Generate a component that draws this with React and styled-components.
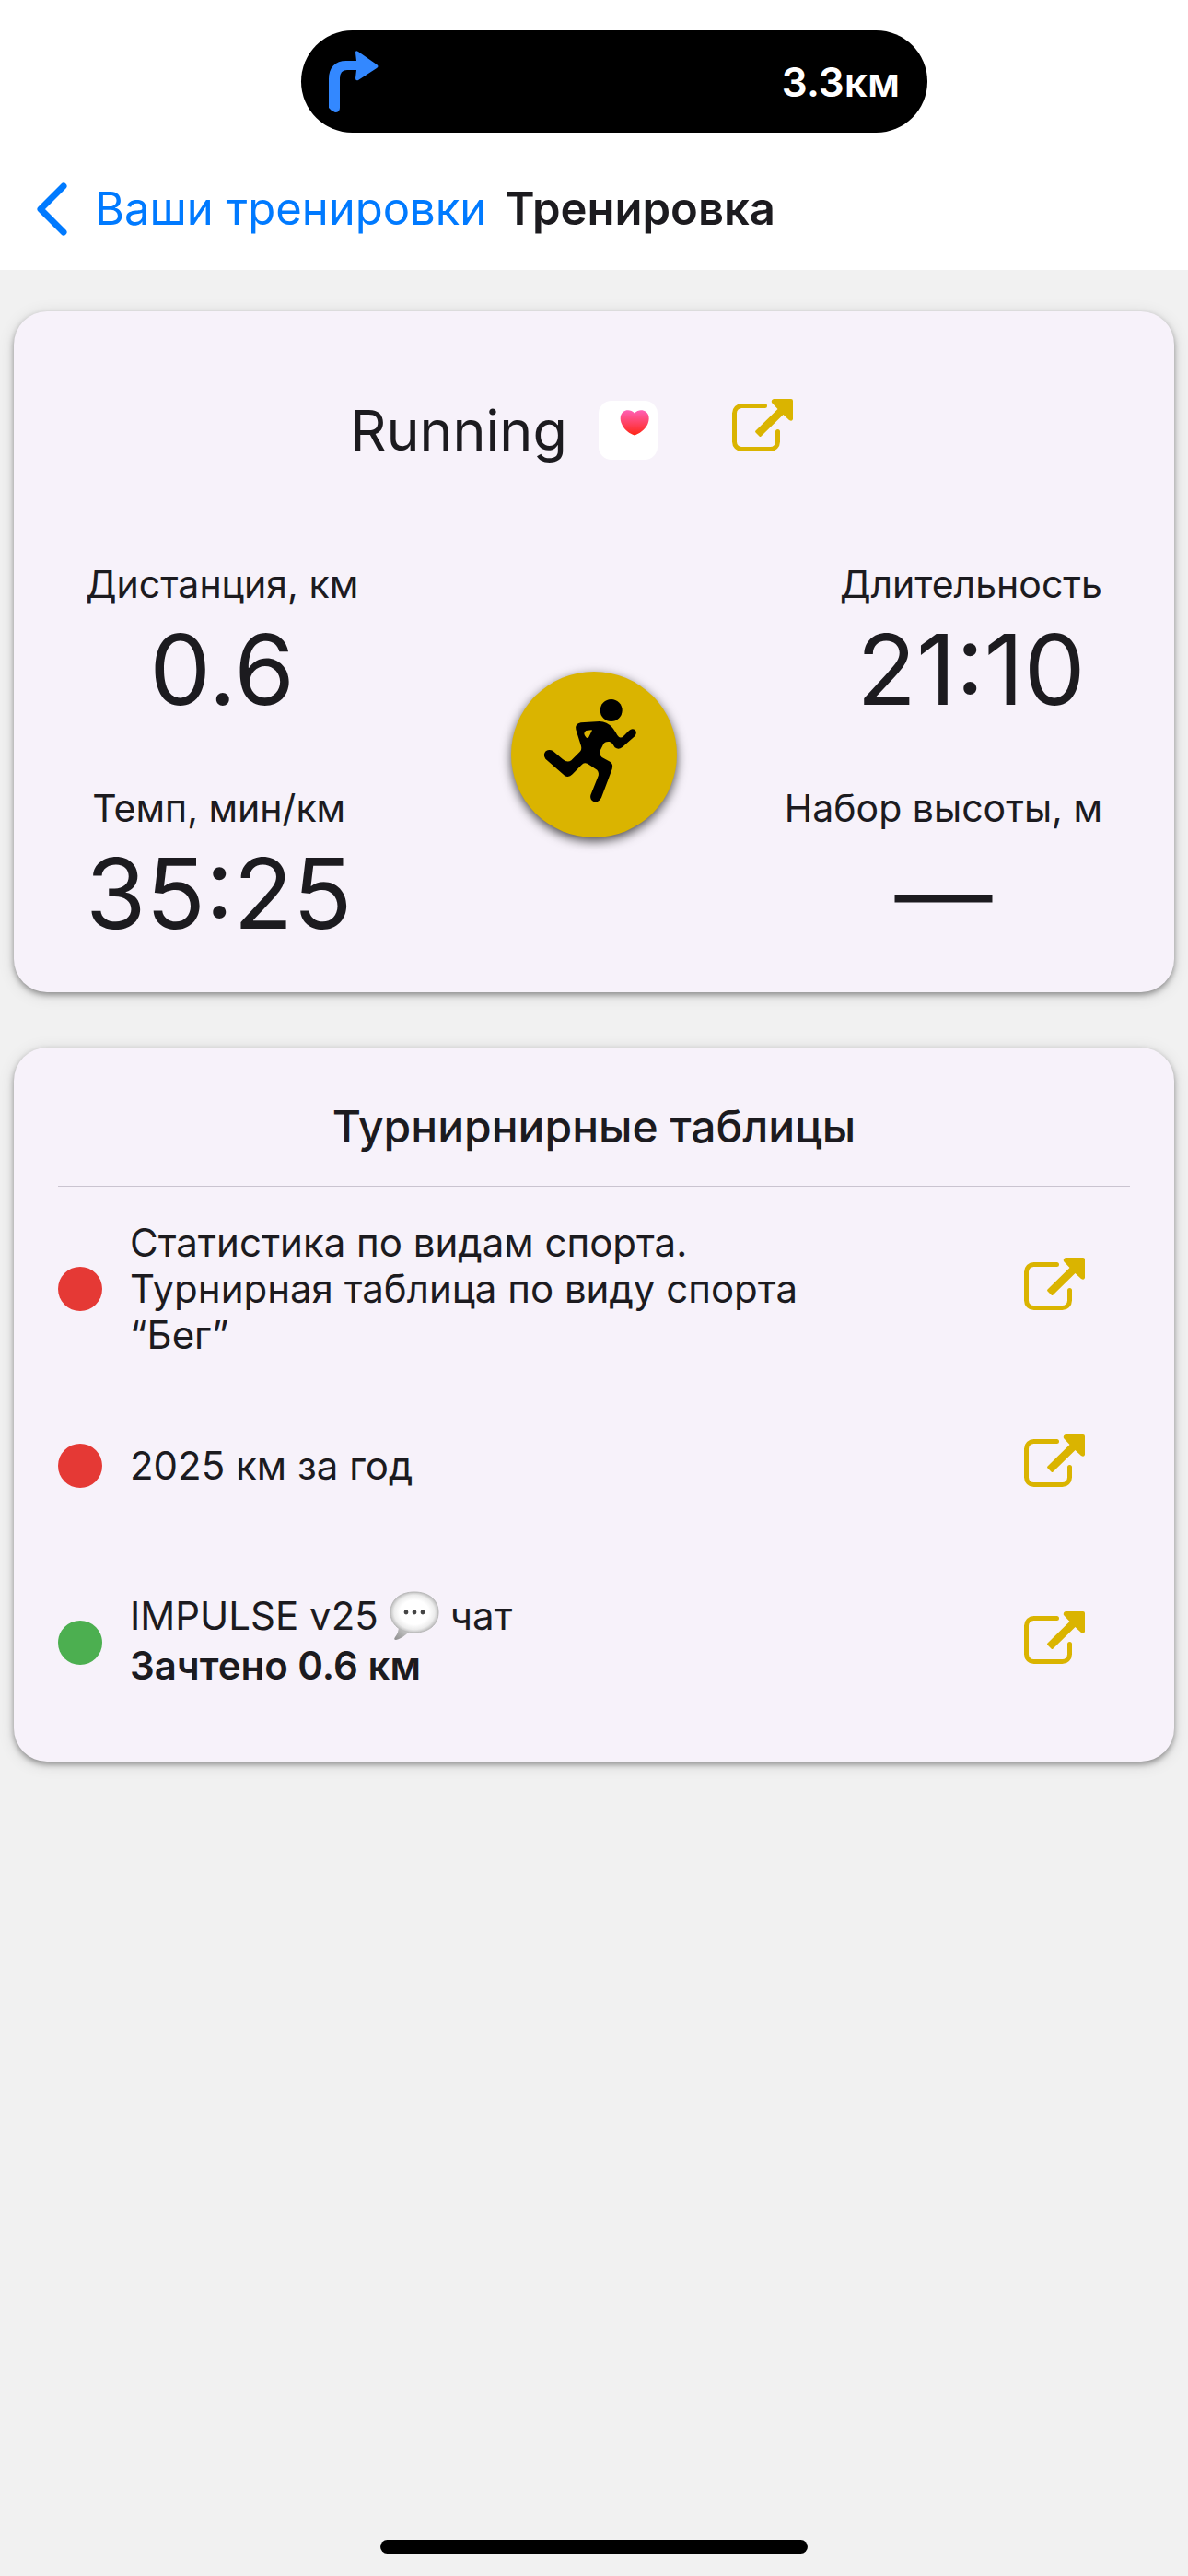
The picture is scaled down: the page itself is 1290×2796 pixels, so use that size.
import styled, { createGlobalStyle } from "styled-components";

const GlobalStyle = createGlobalStyle`
  * {
    box-sizing: border-box;
  }
  body {
    margin: 0;
    background: #f1f1f1;
    font-family: Inter, "Liberation Sans", sans-serif;
    color: #1c1b1f;
  }
`;

const Page = styled.div`
  display: flex;
  flex-direction: column;
  min-height: 100vh;
`;

const TopArea = styled.header`
  padding-top: 33px;
  background: #fff;
`;

const StatusBar = styled.div`
  display: flex;
  justify-content: center;
  padding-left: 44px;
`;

const Island = styled.div`
  display: flex;
  align-items: center;
  justify-content: space-between;
  width: 680px;
  height: 111px;
  padding: 0 30px;
  border-radius: 56px;
  background: #000;
`;

const IslandText = styled.span`
  color: #fff;
  font-size: 44px;
  font-weight: 600;
`;

const NavBar = styled.nav`
  display: flex;
  align-items: center;
  gap: 20px;
  height: 149px;
  padding: 16px 37px 0;
`;

const BackLink = styled.a`
  display: flex;
  align-items: center;
  gap: 30px;
  color: #007aff;
  font-size: 49px;
  text-decoration: none;
`;

const PageTitle = styled.h1`
  margin: 0;
  font-size: 49px;
  font-weight: 600;
`;

const Content = styled.main`
  display: flex;
  flex-direction: column;
  gap: 60px;
  padding: 45px 15px;
`;

const Card = styled.section`
  padding: 0 48px;
  border-radius: 36px;
  background: #f7f2fa;
  box-shadow: 0 3px 6px rgba(0, 0, 0, 0.36), 0 3px 18px rgba(0, 0, 0, 0.12);
`;

const WorkoutHead = styled.div`
  display: flex;
  align-items: center;
  justify-content: center;
  gap: 34px;
  height: 241px;
  padding-top: 18px;
  border-bottom: 1px solid #cac4d0;
`;

const WorkoutName = styled.h2`
  margin: 0;
  font-size: 61px;
  font-weight: 400;
`;

const HealthBadge = styled.div`
  width: 64px;
  height: 64px;
  border-radius: 14px;
  background: #fff;
`;

const IconButton = styled.button`
  display: flex;
  flex-shrink: 0;
  padding: 0 49px 0 47px;
  border: 0;
  background: none;
  cursor: pointer;
`;

const StatsGrid = styled.div`
  display: grid;
  grid-template-columns: 1fr auto 1fr;
  align-items: center;
  padding: 25px 30px 44px;
`;

const StatsColumn = styled.dl`
  display: flex;
  flex-direction: column;
  align-items: ${({ $end }) => ($end ? "flex-end" : "flex-start")};
  gap: 57px;
  margin: 0;
`;

const StatItem = styled.div`
  display: flex;
  flex-direction: column;
  align-items: center;
`;

const StatLabel = styled.dt`
  font-size: 41px;
  line-height: 60px;
`;

const StatValue = styled.dd`
  margin: 0;
  font-size: 106px;
  line-height: 126px;
`;

const SportBadge = styled.div`
  width: 180px;
  height: 180px;
  border-radius: 50%;
  background: #dab400;
  box-shadow: 0 4px 12px rgba(0, 0, 0, 0.7);
`;

const TablesTitle = styled.h2`
  margin: 0;
  padding: 56px 0 34px;
  border-bottom: 1px solid #cac4d0;
  font-size: 48px;
  font-weight: 500;
  line-height: 60px;
  text-align: center;
`;

const TableList = styled.ul`
  margin: 0;
  padding: 15px 0 33px;
  list-style: none;
`;

const TableRow = styled.li`
  display: flex;
  align-items: center;
  min-height: 192px;
`;

const StatusDot = styled.span`
  flex-shrink: 0;
  width: 48px;
  height: 48px;
  border-radius: 50%;
  background: ${({ $done }) => ($done ? "#4caf50" : "#e53935")};
`;

const RowText = styled.div`
  flex: 1;
  margin: 0 160px 0 30px;
  font-size: 42px;
  line-height: 50px;
`;

const RowName = styled.div`
  display: flex;
  align-items: center;
  gap: 12px;
  height: 50px;
`;

const RowResult = styled.div`
  padding: 4px 0;
  font-weight: 600;
`;

const HomeIndicator = styled.div`
  width: 36%;
  height: 15px;
  margin: auto auto 24px;
  border-radius: 8px;
  background: #000;
`;

function TurnIcon() {
  return (
    <svg width="54" height="68" viewBox="0 0 54 68" aria-hidden="true">
      <path
        d="M0 62V31C0 18 7 11 19 11h11L29 2q0-3 3-1L52 15q3 2 0 4L32 32q-3 1-3-2l1-9H20q-8 0-8 9v32q0 5-5 5Q3 66 0 62z"
        fill="#3388ff"
      />
    </svg>
  );
}

function ChevronIcon() {
  return (
    <svg width="36" height="58" viewBox="0 0 36 58" aria-hidden="true">
      <path
        d="M32 4 7 29l25 25"
        fill="none"
        stroke="currentColor"
        strokeWidth="7"
        strokeLinecap="round"
        strokeLinejoin="round"
      />
    </svg>
  );
}

function HeartIcon() {
  return (
    <svg width="64" height="64" viewBox="0 0 64 64" aria-hidden="true">
      <defs>
        <linearGradient id="heart" x1="0" y1="0" x2="0" y2="1">
          <stop offset="0" stopColor="#ff5fb4" />
          <stop offset="1" stopColor="#ff2616" />
        </linearGradient>
      </defs>
      <path
        d="M39 13.500C42 10 46 10 49 10.700C56 13 55.500 21 53 26C50 31.500 44 36 39 37.500C34 36 28 31.500 25.500 26C22.500 20 23 13 29 10.700C32 10 36 10 39 13.500z"
        fill="url(#heart)"
      />
    </svg>
  );
}

// The empty strip under the drawing keeps the arrow optically centred.
function OpenIcon() {
  return (
    <svg width="66" height="68" viewBox="0 0 66 68" aria-hidden="true">
      <path
        d="M35.500 7.500H10.500a8 8 0 0 0-8 8V46.500a8 8 0 0 0 8 8H41.500a8 8 0 0 0 8-8V35.500"
        fill="none"
        stroke="#dab400"
        strokeWidth="5"
        strokeLinecap="round"
      />
      <path
        d="M45 0H64q2 0 2 2V22q-1 3-4 1L55.500 17 31.500 40.500q-1 1-2 0l-4-4q-1-1 0-2L49.500 11 43 4q-1-3 2-4z"
        fill="#dab400"
      />
    </svg>
  );
}

function RunnerIcon() {
  return (
    <svg width="180" height="180" viewBox="0 0 540 540" aria-hidden="true">
      <circle cx="326" cy="126" r="36" />
      <path
        d="M227 166L288 162Q312 163 330 182C341 195 347 212 354 214Q360 216 366 210L384 192Q394 183 404 190Q411 198 404 209L362 246Q350 256 338 247C331 236 328 228 316 228Q304 228 300 237L291 255Q286 270 296 279L322 293Q334 300 329 317L294 410Q286 426 270 424Q255 417 259 402L283 342Q288 330 280 320L254 303Q242 293 231 302L200 334Q187 347 174 338L112 284Q102 271 113 259Q124 251 136 258L168 285Q183 298 196 289L223 262Q231 254 228 242L211 188Q207 170 227 166z"
      />
      <path
        d="M244 192L262 190Q265 190 263 193L253 213Q249 218 244 214Q232 200 244 192z"
        fill="#dab400"
      />
    </svg>
  );
}

function BubbleIcon() {
  return (
    <svg width="54" height="54" viewBox="0 0 54 54" role="img" aria-label="💬">
      <defs>
        <radialGradient id="bubble" cx="0.5" cy="0.5" r="0.5">
          <stop offset="0.6" stopColor="#fff" />
          <stop offset="0.85" stopColor="#ececec" />
          <stop offset="1" stopColor="#c2c2c2" />
        </radialGradient>
        <linearGradient id="bubbleTail" x1="1" y1="0" x2="0" y2="1">
          <stop offset="0" stopColor="#d8d8d8" />
          <stop offset="1" stopColor="#8e8e8e" />
        </linearGradient>
      </defs>
      <path
        d="M10 38q0 7-4 12-2 3 1 3 8-2 15-10z"
        fill="url(#bubbleTail)"
      />
      <path
        d="M27 1C43 1 53 10 53 23S43 45 27 45 1 36 1 23 11 1 27 1z"
        fill="url(#bubble)"
        stroke="#b9b9b9"
      />
      <circle cx="18" cy="23" r="2.400" fill="#444" />
      <circle cx="27" cy="23" r="2.400" fill="#444" />
      <circle cx="36" cy="23" r="2.400" fill="#444" />
    </svg>
  );
}

function Stat({ label, value }) {
  return (
    <StatItem>
      <StatLabel>{label}</StatLabel>
      <StatValue>{value}</StatValue>
    </StatItem>
  );
}

function TournamentRow({ done, children }) {
  return (
    <TableRow>
      <StatusDot $done={done} />
      <RowText>{children}</RowText>
      <IconButton type="button" aria-label="Открыть">
        <OpenIcon />
      </IconButton>
    </TableRow>
  );
}

function App() {
  return (
    <Page>
      <GlobalStyle />
      <TopArea>
        <StatusBar>
          <Island>
            <TurnIcon />
            <IslandText>3.3км</IslandText>
          </Island>
        </StatusBar>
        <NavBar>
          <BackLink href="#">
            <ChevronIcon />
            Ваши тренировки
          </BackLink>
          <PageTitle>Тренировка</PageTitle>
        </NavBar>
      </TopArea>
      <Content>
        <Card>
          <WorkoutHead>
            <WorkoutName>Running</WorkoutName>
            <HealthBadge>
              <HeartIcon />
            </HealthBadge>
            <IconButton type="button" aria-label="Открыть">
              <OpenIcon />
            </IconButton>
          </WorkoutHead>
          <StatsGrid>
            <StatsColumn>
              <Stat label="Дистанция, км" value="0.6" />
              <Stat label="Темп, мин/км" value="35:25" />
            </StatsColumn>
            <SportBadge>
              <RunnerIcon />
            </SportBadge>
            <StatsColumn $end>
              <Stat label="Длительность" value="21:10" />
              <Stat label="Набор высоты, м" value="—" />
            </StatsColumn>
          </StatsGrid>
        </Card>
        <Card>
          <TablesTitle>Турнирнирные таблицы</TablesTitle>
          <TableList>
            <TournamentRow>
              Статистика по видам спорта. Турнирная таблица по виду спорта “Бег”
            </TournamentRow>
            <TournamentRow>2025 км за год</TournamentRow>
            <TournamentRow done>
              <RowName>
                IMPULSE v25 <BubbleIcon /> чат
              </RowName>
              <RowResult>Зачтено 0.6 км</RowResult>
            </TournamentRow>
          </TableList>
        </Card>
      </Content>
      <HomeIndicator />
    </Page>
  );
}

export default App;
